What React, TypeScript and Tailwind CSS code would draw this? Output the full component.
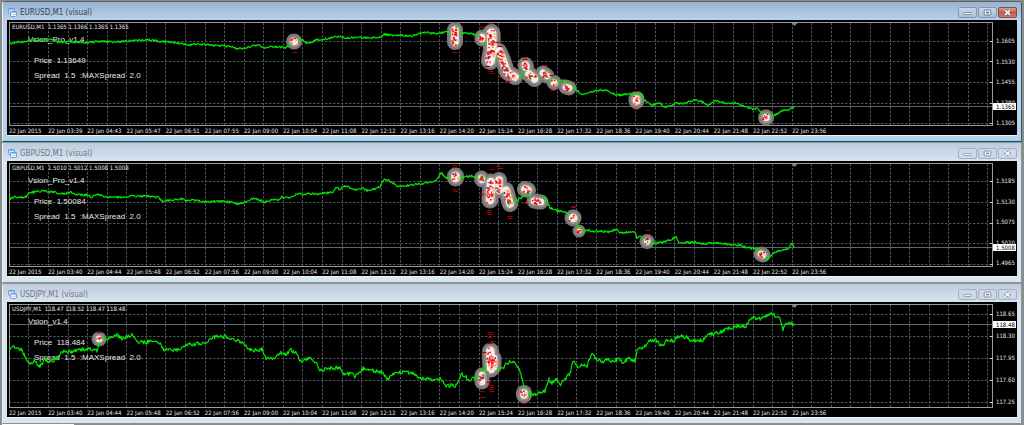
import React from "react";

type Point = [number, number];
type Trade = { path: Point[]; r: number };

type ChartData = {
  symbol: string;
  active: boolean;
  quotes: string;
  expert: string;
  price: string;
  top: number;
  gridY: number[];
  levels: string[];
  axisClass: string;
  currentLabel: string;
  currentY: number;
  times: string[];
  wobble: number;
  line: Point[];
  trades: Trade[];
  ticks: Point[];
};

const LEFT = 9;
const WIDTH = 984;
const HEIGHT = 104;

const LATE = ["09:00", "10:04", "11:08", "12:12", "13:16", "14:20", "15:24", "16:28", "17:32", "18:36", "19:40", "20:44", "21:48", "22:52", "23:56"];
const TIMES_A = ["2015", "03:39", "04:43", "05:47", "06:51", "07:55", ...LATE];
const TIMES_B = ["2015", "03:40", "04:44", "05:48", "06:52", "07:56", ...LATE];

const charts: ChartData[] = [
  {
    symbol: "EURUSD,M1",
    active: true,
    quotes: "1.1365 1.1366 1.1365 1.1365",
    expert: "Vsion_Pro_v1.4",
    price: "1.13649",
    top: 22,
    gridY: [41, 61, 82, 103, 123],
    levels: ["1.1605", "1.1530", "1.1455", "1.1380", "1.1305"],
    axisClass: "pt-[15px] -mb-px",
    currentLabel: "1.1365",
    currentY: 106,
    times: TIMES_A,
    wobble: 2,
    line: [[9, 43.5], [14, 43], [19, 41.5], [25, 42], [28, 40], [35, 41], [45, 40.5], [50, 39.5], [58, 42], [65, 42], [75, 42], [88, 42.5], [94, 42], [100, 41], [110, 42], [120, 41.5], [130, 41], [137, 40.5], [145, 40], [152, 40], [157, 41], [170, 42], [180, 43.5], [190, 45], [197, 44], [205, 45], [215, 45.5], [225, 46], [232, 47], [238, 48.5], [246, 48], [250, 46.5], [258, 44.5], [264, 48], [272, 46.5], [285, 47.5], [291, 45], [298, 38.5], [303, 40], [306, 43], [312, 42], [316, 40], [330, 38.5], [335, 36], [341, 37], [347, 38], [355, 37], [370, 38], [382, 37], [384, 34], [393, 35.5], [411, 36], [425, 32], [435, 33.5], [446, 32], [465, 33], [473, 34], [480, 37], [487, 45], [492, 55], [500, 60], [505, 72], [515, 76], [520, 77], [525, 72], [528, 70], [531, 73], [535, 80], [540, 76], [545, 73], [550, 82], [555, 80], [560, 81], [564, 80], [568, 84], [575, 89], [579, 92], [582, 95], [588, 93], [594, 91], [600, 90], [608, 91], [614, 94], [620, 95], [625, 94], [634, 94], [640, 93], [644, 100], [652, 105], [660, 103], [665, 107], [677, 103], [683, 104], [691, 101], [695, 100], [703, 102], [708, 105], [715, 101], [725, 103], [735, 103], [745, 106], [752, 109], [758, 108], [762, 113], [770, 117], [777, 114], [783, 110], [786, 111], [790, 109], [794, 107]],
    trades: [
      { path: [[294, 41.5]], r: 8 },
      { path: [[455, 30], [455, 42]], r: 8 },
      { path: [[482, 37], [482, 39]], r: 7.5 },
      { path: [[491.5, 33], [492, 50], [490, 61]], r: 9 },
      { path: [[499, 51], [503, 60], [507, 72], [515, 77]], r: 8 },
      { path: [[525.5, 65], [526, 67]], r: 8 },
      { path: [[529, 74], [534.5, 79]], r: 8 },
      { path: [[543, 73], [547, 76]], r: 7.5 },
      { path: [[554, 82.5]], r: 7.5 },
      { path: [[566, 87], [569, 88]], r: 7.5 },
      { path: [[636.5, 99], [636.5, 101]], r: 8 },
      { path: [[766, 117.5]], r: 8 },
    ],
    ticks: [[295, 52], [455, 52], [491, 23], [482, 27], [498, 42], [500, 46], [487, 66], [491, 71], [492, 73], [524, 57], [525, 59], [500, 77], [508, 81], [545, 65], [552, 75], [553, 90], [636, 91], [636, 109], [766, 109]],
  },
  {
    symbol: "GBPUSD,M1",
    active: false,
    quotes: "1.5010 1.5012 1.5008 1.5008",
    expert: "Vsion_Pro_v1.4",
    price: "1.50084",
    top: 163,
    gridY: [181, 202, 223, 243, 264],
    levels: ["1.5185", "1.5130", "1.5075", "1.5020", "1.4965"],
    axisClass: "pt-[14px]",
    currentLabel: "1.5008",
    currentY: 247,
    times: TIMES_B,
    wobble: 2.2,
    line: [[9, 199], [15, 197], [20, 197], [26, 197], [30, 193], [34, 192], [41, 191], [53, 192], [64, 194], [71, 192], [77, 195], [87, 195], [91, 197], [98, 194], [104, 196], [111, 198], [120, 197], [128, 196.5], [140, 196], [148, 196.5], [158, 197], [162, 201], [172, 200], [184, 199], [187, 201], [193, 200], [205, 202], [220, 201], [230, 202], [238, 204], [246, 202], [251, 199], [257, 199], [264, 202], [272, 200], [279, 200], [282, 197], [289, 198], [295, 195], [300, 194], [318, 194], [333, 192], [336, 187], [340, 189], [346, 186], [355, 190], [362, 188], [368, 191], [380, 187], [384, 179], [390, 181], [398, 187], [405, 186], [417, 184], [427, 183], [437, 180], [441, 172], [446, 178], [455, 177], [463, 177], [472, 176], [480, 178], [488, 181], [495, 185], [503, 192], [510, 200], [515, 201], [521, 198], [527, 193], [533, 199], [540, 200], [545, 197], [550, 208], [558, 211], [568, 213], [573, 218], [577, 224], [581, 233], [588, 230], [593, 232], [600, 231], [610, 232], [616, 229], [620, 233], [634, 231], [637, 238], [640, 236], [645, 243], [650, 244], [663, 242], [670, 240], [676, 237], [679, 243], [695, 242], [705, 244], [715, 243], [725, 244], [738, 245], [750, 248], [757, 249], [762, 252], [767, 260], [771, 255], [777, 251], [788, 249], [792, 244], [794, 247]],
    trades: [
      { path: [[455.5, 176], [455.5, 178]], r: 8.5 },
      { path: [[481.5, 178], [482, 180]], r: 7.5 },
      { path: [[499, 180], [499, 190]], r: 8 },
      { path: [[491, 182], [490, 200]], r: 8.5 },
      { path: [[506, 190], [510, 204]], r: 8 },
      { path: [[525, 189], [528, 190]], r: 8 },
      { path: [[534, 201], [541, 202]], r: 7.5 },
      { path: [[573, 218]], r: 8.5 },
      { path: [[579, 231]], r: 6.5 },
      { path: [[647, 241.5]], r: 7.5 },
      { path: [[761, 254], [763, 255]], r: 7.5 },
    ],
    ticks: [[455, 165], [455, 167], [455, 189], [456, 191], [492, 169], [498, 166], [501, 168], [489, 210], [489, 212], [490, 214], [510, 216], [510, 218], [526, 203], [573, 207], [575, 206], [648, 230], [482, 194]],
  },
  {
    symbol: "USDJPY,M1",
    active: false,
    quotes: "118.47 118.52 118.47 118.48",
    expert: "Vsion_v1.4",
    price: "118.484",
    top: 304,
    gridY: [314, 336, 358, 380, 402],
    levels: ["118.65", "118.30", "117.95", "117.60", "117.25"],
    axisClass: "pt-[6px] pb-[2px]",
    currentLabel: "118.48",
    currentY: 324,
    times: TIMES_B,
    wobble: 3.8,
    line: [[9, 349], [14, 347], [21, 349], [25, 356], [30, 364], [34, 361], [40, 366], [45, 360], [50, 362], [58, 358], [63, 351], [72, 352], [82, 349], [90, 349], [97, 351], [100, 338], [105, 340], [112, 336], [117, 335], [122, 339], [132, 335], [138, 342], [148, 342], [158, 341], [164, 350], [170, 349], [178, 350], [185, 345], [190, 344], [198, 344], [205, 343], [213, 337], [225, 337], [232, 338], [240, 342], [246, 346], [252, 351], [262, 349], [266, 358], [274, 359], [280, 353], [285, 355], [291, 350], [297, 354], [300, 361], [310, 358], [316, 362], [320, 371], [330, 368], [340, 368], [344, 375], [352, 373], [354, 377], [364, 368], [375, 371], [382, 372], [388, 379], [394, 374], [405, 372], [415, 374], [422, 379], [430, 379], [435, 381], [440, 379], [446, 386], [453, 385], [456, 386], [462, 374], [470, 380], [475, 378], [482, 372], [490, 362], [499, 371], [505, 366], [508, 362], [514, 362], [520, 371], [524, 386], [526, 396], [530, 393], [535, 395], [540, 393], [545, 391], [549, 379], [552, 383], [556, 380], [561, 384], [566, 378], [570, 374], [573, 360], [578, 367], [582, 365], [587, 366], [592, 352], [596, 359], [603, 362], [607, 359], [612, 361], [620, 359], [623, 363], [629, 358], [635, 361], [637, 350], [645, 346], [651, 340], [656, 340], [661, 346], [668, 340], [673, 341], [680, 335], [688, 338], [690, 342], [695, 340], [703, 340], [708, 334], [718, 333], [725, 330], [735, 326], [746, 326], [752, 317], [757, 320], [768, 315], [773, 314], [780, 319], [783, 330], [786, 323], [794, 324]],
    trades: [
      { path: [[99, 339]], r: 7.5 },
      { path: [[482, 375], [482, 382]], r: 7.5 },
      { path: [[490.5, 351], [491, 369]], r: 8.5 },
      { path: [[494, 358], [494, 367]], r: 7.5 },
      { path: [[524, 393], [524, 395]], r: 8 },
    ],
    ticks: [[99, 332], [490, 332], [491, 334], [490, 337], [493, 341], [490, 343], [482, 391], [483, 397], [491, 385], [492, 387], [491, 389], [492, 391], [484, 352], [489, 382], [524, 403]],
  },
];

function randomSource(seed: number) {
  let state = seed;
  return () => {
    state = (state * 1664525 + 1013904223) % 4294967296;
    return state / 4294967296;
  };
}

function linePath(points: Point[], wobble: number, seed: number) {
  const rnd = randomSource(seed);
  const parts: string[] = [];
  for (let i = 0; i < points.length - 1; i++) {
    const [x0, y0] = points[i];
    const [x1, y1] = points[i + 1];
    for (let x = x0; x < x1; x += 0.8) {
      const y = y0 + ((y1 - y0) * (x - x0)) / (x1 - x0) + (rnd() - 0.5) * wobble;
      parts.push(`${x.toFixed(1)} ${y.toFixed(1)}`);
    }
  }
  const last = points[points.length - 1];
  parts.push(`${last[0]} ${last[1]}`);
  return "M" + parts.join("L");
}

function tradePath(path: Point[]) {
  if (path.length === 1) {
    const [x, y] = path[0];
    return `M${x} ${y}L${x + 0.1} ${y}`;
  }
  return "M" + path.map((p) => p.join(" ")).join("L");
}

const SPECKS = ["#ff0000", "#ff1010", "#f03030", "#ff0000", "#ff2020", "#ff0000", "#ff5050", "#ffffff", "#2a8a2a", "#ff0000", "#e03030", "#3030e0", "#ff1010"];

function specks(trade: Trade, seed: number) {
  const rnd = randomSource(seed);
  const out: { x: number; y: number; w: number; h: number; fill: string }[] = [];
  const nodes = trade.path.length === 1 ? [trade.path[0], trade.path[0]] : trade.path;
  const spread = trade.r - 4.8;
  for (let i = 0; i < nodes.length - 1; i++) {
    const [a, b] = [nodes[i], nodes[i + 1]];
    const length = Math.hypot(b[0] - a[0], b[1] - a[1]);
    const count = Math.round(7 + length * 1.7);
    for (let k = 0; k < count; k++) {
      const t = rnd();
      const dx = (rnd() - 0.5) * 2 * spread;
      const dy = (rnd() - 0.5) * 2 * spread;
      const pick = Math.floor(rnd() * SPECKS.length);
      out.push({
        x: a[0] + (b[0] - a[0]) * t + dx - 0.8,
        y: a[1] + (b[1] - a[1]) * t + dy - 0.7,
        w: 1.2 + rnd(),
        h: 1.2 + rnd() * 0.8,
        fill: dx > spread * 0.6 ? "#efb877" : SPECKS[pick],
      });
    }
  }
  return out;
}

function Grid({ chart }: { chart: ChartData }) {
  const { top } = chart;
  const columns = Array.from({ length: 50 }, (_, i) => 9.4 + (i + 1) * 19.57);
  return (
    <svg className="block h-[104px] w-full" viewBox={`${LEFT} ${top} ${WIDTH} ${HEIGHT}`} preserveAspectRatio="none" aria-hidden="true">
      <g stroke="#4a555e" strokeWidth="1" strokeDasharray="2.5 1.5">
        {columns.map((x) => (
          <line key={x} x1={Math.floor(x) + 0.5} x2={Math.floor(x) + 0.5} y1={top + 1} y2={top + 103} />
        ))}
        {chart.gridY.map((y) => (
          <line key={y} x1={LEFT} x2={LEFT + 983} y1={y + 0.5} y2={y + 0.5} />
        ))}
      </g>
      <line x1={LEFT} x2={LEFT + 983} y1={chart.currentY + 0.5} y2={chart.currentY + 0.5} stroke="#5c6873" />
      <rect x={LEFT + 0.5} y={top + 0.5} width={983} height={103} fill="none" stroke="#9a9a9a" />
      {chart.gridY.map((y) => (
        <line key={y} x1={LEFT + 981} x2={LEFT + 984} y1={y + 0.5} y2={y + 0.5} stroke="#c8c8c8" />
      ))}
      <path d={`M791.5 ${top + 1}h6l-3 3z`} fill="#76838f" />
    </svg>
  );
}

function Series({ chart }: { chart: ChartData }) {
  const { top, trades } = chart;
  return (
    <svg className="absolute inset-0 h-[104px] w-full" viewBox={`${LEFT} ${top} ${WIDTH} ${HEIGHT}`} preserveAspectRatio="none" role="img" aria-label={`${chart.symbol} price`}>
      <g fill="none" strokeLinecap="round" strokeLinejoin="round">
        {trades.map((t, i) => (
          <path key={i} d={tradePath(t.path)} stroke="#7b7776" strokeWidth={t.r * 2} />
        ))}
        {trades.map((t, i) => (
          <path key={i} d={tradePath(t.path)} stroke="#95908e" strokeWidth={t.r * 2 - 5} />
        ))}
        <path d={linePath(chart.line, chart.wobble, 11 + top)} stroke="#00e800" strokeWidth="1.2" />
        {trades.map((t, i) => (
          <path key={i} d={tradePath(t.path)} stroke="#fbeae4" strokeWidth={t.r * 2 - 8.5} />
        ))}
      </g>
      {chart.ticks.map(([x, y], i) => (
        <path key={i} d={`M${x - 2.5} ${y + 0.5}h5`} stroke="#a80000" strokeWidth="1" />
      ))}
      {trades.map((t, i) => (
        <g key={i}>
          {specks(t, 97 + i * 31 + top).map((s, k) => (
            <rect key={k} x={s.x} y={s.y} width={s.w} height={s.h} fill={s.fill} />
          ))}
        </g>
      ))}
    </svg>
  );
}

function ChartIcon() {
  return (
    <svg className="h-[9px] w-[9px]" viewBox="0 0 9 9" aria-hidden="true">
      <rect x="0.5" y="0.5" width="6" height="5" rx="0.8" fill="#d4e6fb" stroke="#6fa0dc" />
      <path d="M0.5 1h6" stroke="#5b92d8" />
      <rect x="2.5" y="3.5" width="6" height="5" rx="0.8" fill="#f2f8ff" stroke="#6fa0dc" />
      <path d="M2.5 4h6" stroke="#5b92d8" />
      <path d="M3.6 7.2l1-1 1 .8 1-1.2 1 1" fill="none" stroke="#7aa5da" strokeWidth="0.6" />
    </svg>
  );
}

function TitleButtons({ active }: { active: boolean }) {
  const plain = active
    ? "border-[#8298b2] bg-linear-to-b from-[#c4d6ea] to-[#a9c0da]"
    : "border-[#a4b1c4] bg-[#cbd8e7]";
  const close = active
    ? "border-[#8a4a48] bg-linear-to-b from-[#dc9a8c] via-[#c9594a] to-[#d27560]"
    : "border-[#a4b1c4] bg-[#cbd8e7]";
  const base = "flex h-[11px] w-[19px] items-center justify-center rounded-[2px] border";
  const ink = active ? "#5f6f82" : "#7b8799";
  return (
    <div className="flex gap-px">
      <button type="button" aria-label="Minimize" className={`${base} ${plain}`}>
        <svg className="h-[7px] w-[9px]" viewBox="0 0 9 7">
          <rect x="1" y="3.5" width="7" height="2" rx="0.5" fill="#f6f8fb" stroke={ink} strokeWidth="0.7" />
        </svg>
      </button>
      <button type="button" aria-label="Maximize" className={`${base} ${plain}`}>
        <svg className="h-[7px] w-[9px]" viewBox="0 0 9 7">
          <rect x="1.2" y="1" width="6.6" height="5" rx="0.7" fill="#f6f8fb" stroke={ink} strokeWidth="0.9" />
          <rect x="3" y="2.7" width="3" height="1.6" fill={ink} />
        </svg>
      </button>
      <button type="button" aria-label="Close" className={`${base} ${close}`}>
        <svg className="h-[7px] w-[9px]" viewBox="0 0 9 7">
          <path d="M2 1.2l5 4.6M7 1.2L2 5.8" stroke={ink} strokeWidth="3" />
          <path d="M2 1.2l5 4.6M7 1.2L2 5.8" stroke="#f8f8fa" strokeWidth="1.6" />
        </svg>
      </button>
    </div>
  );
}

function ChartWindow({ chart }: { chart: ChartData }) {
  const { active, top } = chart;
  const frame = active
    ? "border-t-[#56626f] border-b-[#1f5664] border-l-[#e4eef8] border-r-[#2d5e6c] bg-[#b9d1ea]"
    : "border-t-[#8f969e] border-b-[#8c8f93] border-l-[#eef3f8] border-r-[#8c9298] bg-[#d7e4f2]";
  return (
    <section className={`flex flex-col rounded-t-[3px] border ${frame}`}>
      <header
        className={`flex h-[18px] items-center justify-between rounded-t-[3px] pr-[4px] pl-[5px] pt-[3px] ${
          active ? "bg-linear-to-b from-[#98b3d1] to-[#b9d1ea]" : "bg-linear-to-b from-[#bfcbda] to-[#d7e4f2]"
        }`}
      >
        <div className="flex items-center gap-[3px]">
          <ChartIcon />
          <h2
            className={`font-['DejaVu_Sans_Condensed','DejaVu_Sans',sans-serif] text-[8px] leading-[12px] font-normal whitespace-nowrap ${
              active ? "text-[#35414e]" : "text-[#6f7883]"
            }`}
          >
            {chart.symbol} (visual)
          </h2>
        </div>
        <TitleButtons active={active} />
      </header>
      <div className={`px-[4px] ${active ? "pb-[4px] border-b border-[#7fd3ec]" : "pb-[5px]"}`}>
        <div className="border-b border-[#f0f4f8]">
          <div className="bg-black pt-[2px] pl-[2px] font-['DejaVu_Sans_Condensed','DejaVu_Sans',sans-serif] text-[6px] text-[#e6e6e6]">
            <div className="flex">
              <div className="relative min-w-0 flex-1">
                <Grid chart={chart} />
                <div className="absolute inset-0 whitespace-pre">
                  <p className="pl-[3px] leading-[10px]">
                    {chart.symbol}
                    {"  "}
                    {chart.quotes}
                  </p>
                  <div className="pl-[25px] font-['Liberation_Sans',sans-serif] text-[8px] leading-[15px]">
                    <p className="-ml-[6px] pb-[6px]">{chart.expert}</p>
                    <p>{`Price  ${chart.price}`}</p>
                    <p>{"Spread  1.5  :MAXSpread  2.0"}</p>
                  </div>
                </div>
                <Series chart={chart} />
              </div>
              <div className={`relative flex w-[24px] flex-col justify-between pl-[3px] leading-[8px] ${chart.axisClass}`}>
                {chart.levels.map((l) => (
                  <span key={l}>{l}</span>
                ))}
                <span
                  className="absolute left-0 w-[23px] bg-white pl-[3px] leading-[7px] text-black"
                  style={{ top: chart.currentY - top - 3 }}
                >
                  {chart.currentLabel}
                </span>
              </div>
            </div>
            <div className="mr-[24px] flex h-[9px] overflow-hidden leading-[10px]">
              {chart.times.map((t) => (
                <span key={t} className="w-[3.98%] shrink-0 whitespace-nowrap">
                  22 Jan {t}
                </span>
              ))}
            </div>
          </div>
        </div>
      </div>
    </section>
  );
}

export default function App() {
  return (
    <main className="bg-[#8c8c8c] pt-px pr-[2px] pl-[2px]">
      {charts.map((c) => (
        <ChartWindow key={c.symbol} chart={c} />
      ))}
      <div className="h-px w-[72px] bg-white" />
    </main>
  );
}
